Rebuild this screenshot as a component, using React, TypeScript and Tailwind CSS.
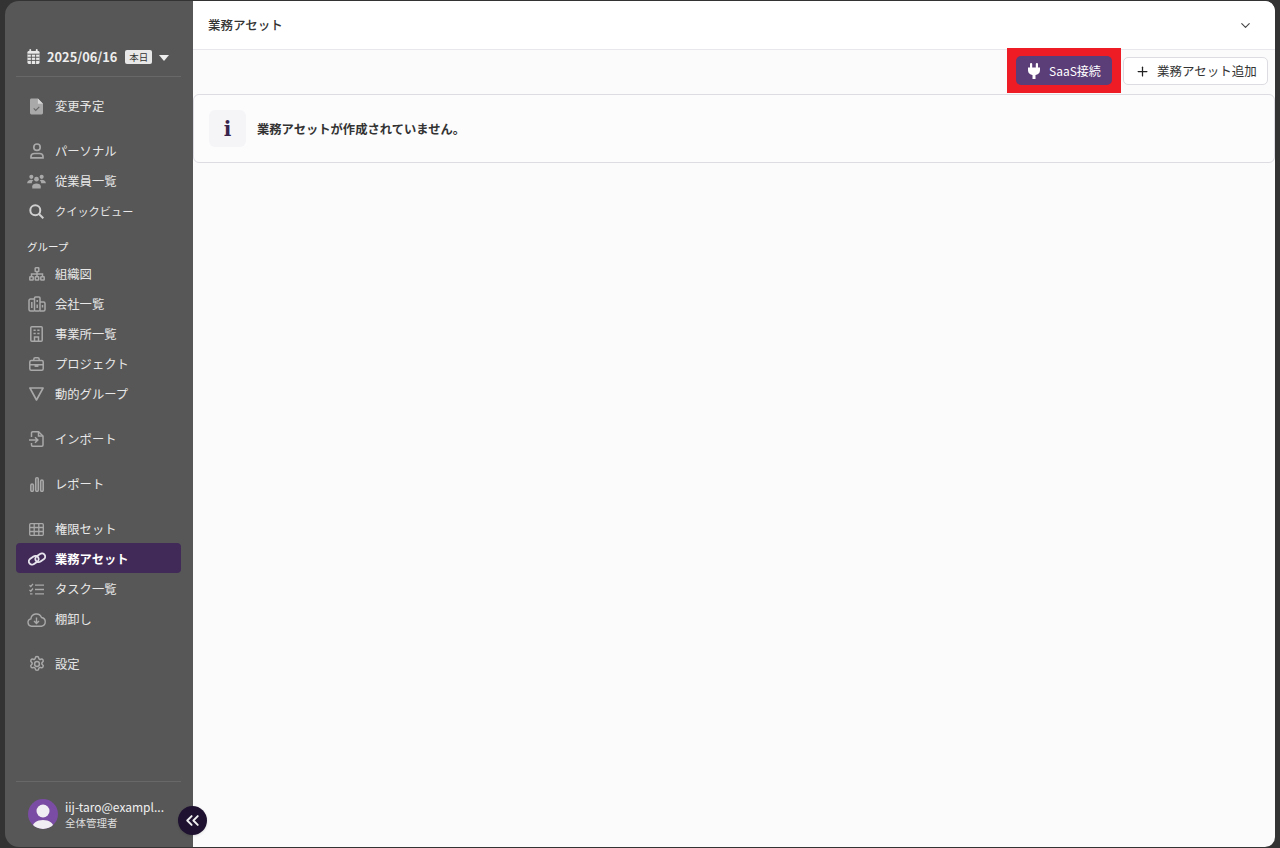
import { ChevronDown, ChevronsLeft, Plus } from 'lucide-react';
import type { ReactNode } from 'react';

const font = { fontFamily: '"Noto Sans CJK JP", "Noto Sans", sans-serif' };
const iconGray = '#a9a9a9';

function CalendarIcon() {
  return (
    <svg viewBox="0 0 14 16" className="h-[15px] w-[13px]">
      <rect x="2.500" y="0" width="2" height="3.500" rx="1" fill="#e8e8e8" />
      <rect x="9.500" y="0" width="2" height="3.500" rx="1" fill="#e8e8e8" />
      <rect x="0.500" y="2" width="13" height="14" rx="1.500" fill="#e8e8e8" />
      <path d="M.5 5.500h13M.5 8.800h13M.5 12.200h13M4.700 5.500V16M9.300 5.500V16" stroke="#575757" strokeWidth="1" />
    </svg>
  );
}

function DocCheck() {
  return (
    <svg viewBox="0 0 14 18" className="h-[17px] w-[13px]">
      <path d="M0 2A1.500 1.500 0 0 1 1.500.5H8.500L14 6v10a1.500 1.500 0 0 1-1.500 1.500h-11A1.500 1.500 0 0 1 0 16z" fill="#a9a9a9" />
      <path d="M8.500.5V6H14z" fill="#d6d6d6" />
      <path d="M4 11l2.200 2.200L10 9.500" fill="none" stroke="#666666" strokeWidth="1.200" />
    </svg>
  );
}

function PersonIcon() {
  return (
    <svg viewBox="0 0 14 16" className="h-[16px] w-[14px]" fill="none" stroke={iconGray} strokeWidth="1.700">
      <circle cx="7" cy="4.200" r="3.200" />
      <path d="M1 14.800v-1.300c0-2 1.500-3 3.500-3h5c2 0 3.500 1 3.500 3v1.300z" />
    </svg>
  );
}

function People() {
  return (
    <svg viewBox="0 0 20 16" className="h-[15px] w-[19px]" fill={iconGray}>
      <circle cx="4.500" cy="3" r="2.200" />
      <circle cx="15.500" cy="3" r="2.200" />
      <circle cx="10" cy="5.500" r="2.500" />
      <path d="M0 9.800C0 7.500 2 6 4.500 6c1 0 1.700.2 2.200.5C5.600 7.500 5 8.500 5 9.800zM20 9.800C20 7.500 18 6 15.500 6c-1 0-1.700.2-2.200.5 1.100 1 1.700 2 1.700 3.300z" />
      <path d="M5.500 15.500v-2.500c0-2 2-3 4.500-3s4.500 1 4.500 3v2.500z" />
    </svg>
  );
}

function SearchIcon() {
  return (
    <svg viewBox="0 0 15 15" className="h-[15px] w-[15px]" fill="none" stroke="#cfcfcf" strokeWidth="2">
      <circle cx="6.300" cy="6.300" r="5" />
      <path d="M10 10l4.300 4.300" />
    </svg>
  );
}

function OrgChart() {
  return (
    <svg viewBox="0 0 16 14" className="h-[14px] w-[16px]" fill="none" stroke={iconGray} strokeWidth="1.500">
      <rect x="6.200" y="0.800" width="3.600" height="3.600" rx="0.500" />
      <rect x="0.800" y="9.700" width="3.400" height="3.400" rx="0.500" />
      <rect x="6.300" y="9.700" width="3.400" height="3.400" rx="0.500" />
      <rect x="11.800" y="9.700" width="3.400" height="3.400" rx="0.500" />
      <path d="M8 4.400v5.300M2.500 9.700V7h11v2.700" />
    </svg>
  );
}

function Companies() {
  return (
    <svg viewBox="0 0 18 16" className="h-[16px] w-[18px]" fill="none" stroke={iconGray} strokeWidth="1.500">
      <path d="M6.500 15H2.500A1.500 1.500 0 0 1 1 13.500V4.500A1.500 1.500 0 0 1 2.500 3H6.500" />
      <rect x="6.500" y="1" width="5.500" height="14" rx="1" />
      <path d="M12 6h3.500A1.500 1.500 0 0 1 17 7.500v6a1.500 1.500 0 0 1-1.500 1.500H12" />
      <path d="M3.800 6v6M9.200 4v2M9.200 8.500V12M14.500 9v2.500" />
    </svg>
  );
}

function Office() {
  return (
    <svg viewBox="0 0 13 16" className="h-[16px] w-[13px]" fill="none" stroke={iconGray} strokeWidth="1.500">
      <rect x="0.800" y="0.800" width="11.400" height="14.400" rx="1" />
      <path d="M3.500 4.200h2.200M7.300 4.200h2.200M3.500 7.500h2.200M7.300 7.500h2.200M4.500 15.200v-4.200h4v4.200" />
    </svg>
  );
}

function Briefcase() {
  return (
    <svg viewBox="0 0 15 14" className="h-[14px] w-[15px]" fill="none" stroke={iconGray} strokeWidth="1.500">
      <rect x="0.800" y="3.500" width="13.400" height="9.700" rx="1.500" />
      <path d="M4.800 3.500V2.200A1.400 1.400 0 0 1 6.200.8h2.600a1.400 1.400 0 0 1 1.400 1.400v1.300M.8 7.800h13.400" />
      <path d="M6.300 7.800h2.400v1.400H6.300z" fill={iconGray} />
    </svg>
  );
}

function FunnelIcon() {
  return (
    <svg viewBox="0 0 15 14" className="h-[14px] w-[15px]" fill="none" stroke={iconGray} strokeWidth="1.600" strokeLinejoin="round">
      <path d="M.9 1h13.200L7.500 13z" />
    </svg>
  );
}

function ImportIcon() {
  return (
    <svg viewBox="0 0 15 16" className="h-[16px] w-[15px]" fill="none" stroke={iconGray} strokeWidth="1.500">
      <path d="M2.500 6V2a1.200 1.200 0 0 1 1.200-1.200H9.500L14 5v9a1.200 1.200 0 0 1-1.200 1.200H3.700A1.200 1.200 0 0 1 2.500 14v-2" />
      <path d="M9.500.8V5H14" />
      <path d="M0 9h8.500M6 6.300 8.800 9 6 11.700" />
    </svg>
  );
}

function Bars() {
  return (
    <svg viewBox="0 0 14 15" className="h-[15px] w-[14px]" fill={iconGray} fillOpacity="0.4" stroke={iconGray} strokeWidth="1.300">
      <rect x="0.700" y="7" width="2.800" height="7.500" rx="1.400" />
      <rect x="5.600" y="0.700" width="2.800" height="13.800" rx="1.400" />
      <rect x="10.500" y="3" width="2.800" height="11.500" rx="1.400" />
    </svg>
  );
}

function GridIcon() {
  return (
    <svg viewBox="0 0 15 13" className="h-[13px] w-[15px]" fill="none" stroke={iconGray} strokeWidth="1.300">
      <rect x="0.700" y="0.700" width="13.600" height="11.600" rx="1" />
      <path d="M.7 4.500h13.600M.7 8.500h13.600M5.200.7v11.600M9.800.7v11.600" />
    </svg>
  );
}

function LinkIcon() {
  return (
    <svg viewBox="0 0 18 14" className="h-[14px] w-[18px]" fill="none" stroke="#e6e3ec" strokeWidth="1.900">
      <rect x="0.500" y="5" width="10.500" height="6.500" rx="3.250" transform="rotate(-35 5.750 8.250)" />
      <rect x="7" y="2.500" width="10.500" height="6.500" rx="3.250" transform="rotate(-35 12.250 5.750)" />
    </svg>
  );
}

function TaskIcon() {
  return (
    <svg viewBox="0 0 15 13" className="h-[13px] w-[15px]" fill="none" stroke={iconGray} strokeWidth="1.300">
      <path d="M0.500 2.300 1.800 3.500 4 .8M.5 7 1.800 8.200 4 5.500" />
      <path d="M6 2.200h9M6 6.500h9M6 10.800h9M1 10.800h2.500" />
    </svg>
  );
}

function CloudIcon() {
  return (
    <svg viewBox="0 0 19 15" className="h-[15px] w-[19px]" fill="none" stroke={iconGray} strokeWidth="1.400">
      <path d="M4.500 14.200a3.700 3.700 0 0 1-.6-7.300A5.500 5.500 0 0 1 14.500 5.500a4.400 4.400 0 0 1 0 8.700z" />
      <path d="M9.500 5.500v6M7 9l2.500 2.500L12 9" />
    </svg>
  );
}

function GearIcon() {
  return (
    <svg viewBox="0 0 24 24" className="h-[18px] w-[18px]" fill="none" stroke={iconGray} strokeWidth="2">
      <path d="M9.670 4.140a2.340 2.340 0 0 1 4.660 0 1.750 1.750 0 0 0 2.620 1.510 2.340 2.340 0 0 1 2.330 4.040 1.750 1.750 0 0 0 0 3.020 2.340 2.340 0 0 1-2.330 4.040 1.750 1.750 0 0 0-2.620 1.510 2.340 2.340 0 0 1-4.660 0 1.750 1.750 0 0 0-2.620-1.510 2.340 2.340 0 0 1-2.330-4.040 1.750 1.750 0 0 0 0-3.020 2.340 2.340 0 0 1 2.330-4.040 1.750 1.750 0 0 0 2.620-1.510z" />
      <circle cx="12" cy="12" r="3.200" />
    </svg>
  );
}

function PlugIcon() {
  return (
    <svg viewBox="0 0 12 16" className="h-[16px] w-[12px]" fill="#ffffff">
      <rect x="2" y="0" width="2.200" height="5.500" rx="1" />
      <rect x="7.800" y="0" width="2.200" height="5.500" rx="1" />
      <path d="M0 4.500h12v2.800c0 2.800-2 4.500-4.500 4.800V16h-3v-3.900C2 11.800 0 10.100 0 7.300z" />
    </svg>
  );
}

type Item = { icon: ReactNode; label: string; active?: boolean; small?: boolean };

function NavItem({ icon, label, active, small }: Item) {
  return (
    <div className={`flex h-[30px] items-center rounded-[4px] pt-[2px] ${active ? 'bg-[#412a58] font-bold text-white' : 'text-[#e8e8e8]'}`}>
      <span className="flex w-[39px] shrink-0 items-center justify-center pl-[2px]">{icon}</span>
      <span className={small ? 'text-[11.200px]' : 'text-[12.300px]'}>{label}</span>
    </div>
  );
}

function NavGroup({ items }: { items: Item[] }) {
  return (
    <div className="mb-[15px] flex flex-col">
      {items.map((item) => (
        <NavItem key={item.label} {...item} />
      ))}
    </div>
  );
}

export default function App() {
  return (
    <div style={font} className="flex h-[848px] w-[1280px] overflow-hidden bg-[#333333] pt-[1px] pr-[5px] pb-[1px] pl-[5px]">
      <aside className="relative z-10 flex w-[188px] shrink-0 flex-col rounded-l-[14px] bg-[#575757] pr-[12px] pl-[11px]">
        <div className="flex h-[76px] items-end border-b border-[#686868] pb-[10px] pl-[11px]">
          <span className="mb-[2px]"><CalendarIcon /></span>
          <span className="ml-[7px] text-[12.800px] leading-[18px] font-bold text-[#eeeeee]">2025/06/16</span>
          <span className="mb-[2px] ml-[8px] flex h-[14px] w-[27px] items-center justify-center rounded-[2px] bg-[#e8e8e8] text-[9.500px] text-[#333333]">本日</span>
          <span className="mb-[5px] ml-[7px] h-0 w-0 border-x-[5px] border-t-[6px] border-x-transparent border-t-[#eeeeee]" />
        </div>

        <div className="mt-[13px] flex flex-1 flex-col">
          <NavGroup items={[{ icon: <DocCheck />, label: '変更予定' }]} />
          <div className="flex flex-col">
            <NavItem icon={<PersonIcon />} label="パーソナル" />
            <NavItem icon={<People />} label="従業員一覧" />
            <NavItem icon={<SearchIcon />} label="クイックビュー" small />
          </div>
          <div className="flex h-[33px] items-end pb-[3px] pl-[11px] text-[10.500px] text-[#eeeeee]">グループ</div>
          <NavGroup
            items={[
              { icon: <OrgChart />, label: '組織図' },
              { icon: <Companies />, label: '会社一覧' },
              { icon: <Office />, label: '事業所一覧' },
              { icon: <Briefcase />, label: 'プロジェクト' },
              { icon: <FunnelIcon />, label: '動的グループ' },
            ]}
          />
          <NavGroup items={[{ icon: <ImportIcon />, label: 'インポート' }]} />
          <NavGroup items={[{ icon: <Bars />, label: 'レポート' }]} />
          <NavGroup
            items={[
              { icon: <GridIcon />, label: '権限セット' },
              { icon: <LinkIcon />, label: '業務アセット', active: true },
              { icon: <TaskIcon />, label: 'タスク一覧' },
              { icon: <CloudIcon />, label: '棚卸し' },
            ]}
          />
          <NavGroup items={[{ icon: <GearIcon />, label: '設定' }]} />
        </div>

        <div className="flex h-[66px] items-start gap-[7px] border-t border-[#686868] pt-[17px] pl-[12px]">
          <div className="flex h-[30px] w-[30px] shrink-0 items-end justify-center overflow-hidden rounded-full bg-[#7a4ca3]">
            <svg viewBox="0 0 30 30" className="h-[30px] w-[30px]" fill="#f0eef2">
              <circle cx="15" cy="12" r="6.500" />
              <path d="M4 30c0-6 5-9 11-9s11 3 11 9z" />
            </svg>
          </div>
          <div className="flex min-w-0 flex-col">
            <span className="whitespace-nowrap text-[12px] leading-[16px] text-[#f0f0f0]">iij-taro@exampl...</span>
            <span className="mt-[1px] text-[10.500px] leading-[14px] text-[#dddddd]">全体管理者</span>
          </div>
        </div>

        <button className="absolute top-[805px] left-[173px] flex h-[29px] w-[29px] items-center justify-center rounded-full bg-[#1e1230] shadow-sm">
          <ChevronsLeft size={21} color="#f0f0f0" strokeWidth={2.2} />
        </button>
      </aside>

      <main className="flex min-w-0 flex-1 flex-col overflow-hidden rounded-r-[10px] bg-[#fbfbfb]">
        <header className="flex h-[49px] shrink-0 items-center justify-between border-b border-[#e8e8ec] bg-white pr-[22px] pl-[15px]">
          <span className="text-[12.500px] font-medium text-[#333333]">業務アセット</span>
          <ChevronDown size={15} color="#444444" strokeWidth={1.8} />
        </header>

        <div className="flex h-[44px] shrink-0 items-start justify-end pr-[7px]">
          <div className="-mt-[2px] h-[45px] w-[114px] bg-[#ee1c25] pt-[8px] pl-[9px]">
            <button className="flex h-[29px] w-[96px] items-center rounded-[5px] bg-[#5b3d78] pl-[12px] text-white">
              <PlugIcon />
              <span className="ml-[9px] text-[12px]">SaaS接続</span>
            </button>
          </div>
          <button className="mt-[7px] ml-[2px] flex h-[28px] w-[145px] items-center rounded-[5px] border border-[#dcdce2] bg-white pl-[11px] text-[#333333]">
            <Plus size={15} color="#222222" strokeWidth={2} />
            <span className="ml-[7px] text-[12.500px]">業務アセット追加</span>
          </button>
        </div>

        <div className="flex h-[69px] shrink-0 items-center rounded-[6px] border border-[#dcdce2] bg-[#fcfcfd] pl-[15px]">
          <div className="flex h-[37px] w-[37px] items-center justify-center rounded-[6px] bg-[#f5f5f8]">
            <span style={{ fontFamily: '"DejaVu Serif", serif' }} className="text-[20px] leading-none font-bold text-[#38244c]">i</span>
          </div>
          <span className="ml-[11px] pt-[2px] text-[12.300px] font-bold text-[#333333]">業務アセットが作成されていません。</span>
        </div>
      </main>
    </div>
  );
}
